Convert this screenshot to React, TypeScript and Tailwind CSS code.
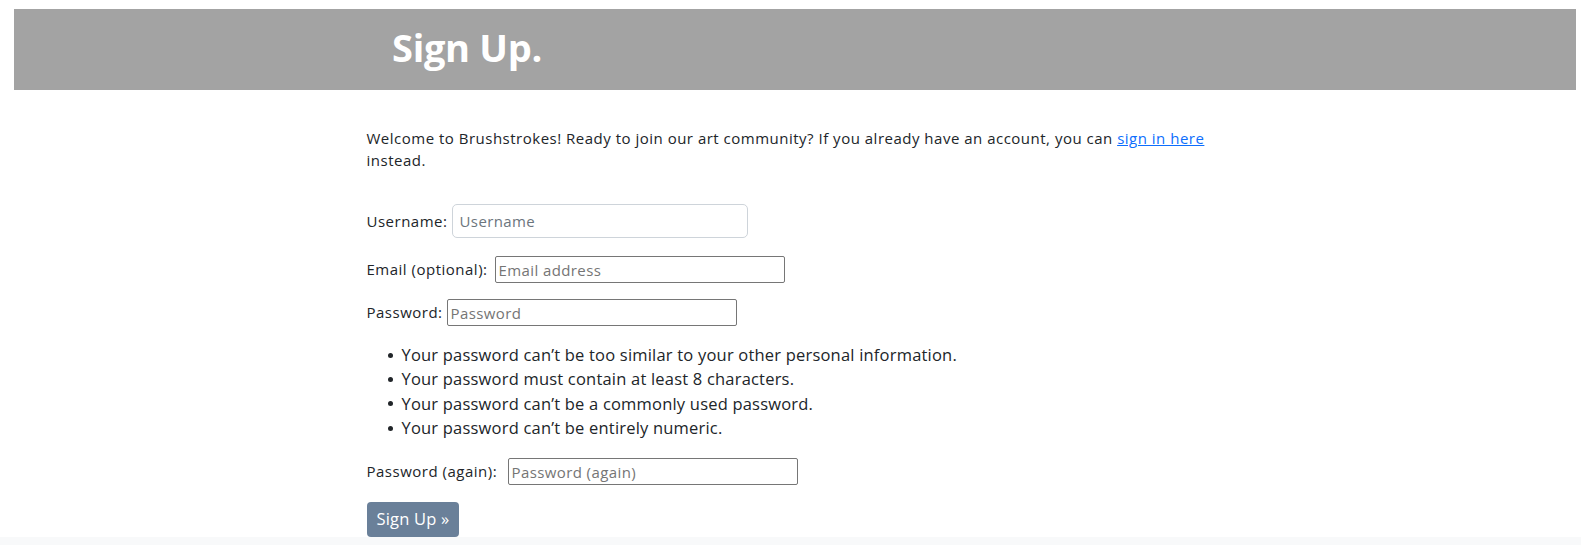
export default function App() {
  return (
    <div className="min-h-[545px] flex flex-col bg-white font-['Open_Sans',sans-serif] text-[#212529] tracking-[0.5px]">
      <div className="pt-[9px]">
        <header className="ml-[14px] mr-[5px] h-[81px] pb-[5px] bg-[#a3a3a3] flex items-center">
          <h1 className="pl-[378px] text-[38px] font-bold text-white leading-none tracking-[-0.3px]">
            Sign Up.
          </h1>
        </header>
      </div>

      <main className="w-[850px] mx-auto flex-1 pl-[1px]">
        <p className="mt-[37px] text-[15px] leading-[22px]">
          Welcome to Brushstrokes! Ready to join our art community? If you already have an account, you can{" "}
          <a href="#" className="text-[#0d6efd] underline">
            sign in here
          </a>{" "}
          instead.
        </p>

        <form className="mt-[33px] text-[15px]">
          <div className="flex items-center h-[34px]">
            <label htmlFor="username" className="w-[85px] shrink-0 whitespace-nowrap">Username:</label>
            <input
              id="username"
              placeholder="Username"
              className="w-[296px] h-[34px] px-[7px] border border-[#ced4da] rounded-[5px] text-[15px] tracking-[0.4px] placeholder:text-[#6c757d] outline-none"
            />
          </div>

          <div className="flex items-center h-[27px] mt-[18px]">
            <label htmlFor="email" className="w-[128px] shrink-0 whitespace-nowrap">Email (optional):</label>
            <input
              id="email"
              placeholder="Email address"
              className="w-[290px] h-[27px] px-[3px] border border-[#767676] rounded-[2px] text-[15px] tracking-[0.4px] placeholder:text-[#757575] outline-none"
            />
          </div>

          <div className="flex items-center h-[27px] mt-[16px]">
            <label htmlFor="password1" className="w-[80px] shrink-0 whitespace-nowrap">Password:</label>
            <input
              id="password1"
              type="password"
              placeholder="Password"
              className="w-[290px] h-[27px] px-[3px] border border-[#767676] rounded-[2px] text-[15px] tracking-[0.4px] placeholder:text-[#757575] outline-none"
            />
          </div>

          <ul className="mt-[17px] pl-[32px] text-[16.5px] leading-[24.3px] tracking-[0.2px]">
            {[
              "Your password can’t be too similar to your other personal information.",
              "Your password must contain at least 8 characters.",
              "Your password can’t be a commonly used password.",
              "Your password can’t be entirely numeric.",
            ].map((t) => (
              <li key={t} className="flex items-center">
                <span className="w-[5px] h-[5px] rounded-full bg-[#212529] -ml-[11px] mr-[9px] shrink-0" />
                {t}
              </li>
            ))}
          </ul>

          <div className="flex items-center h-[27px] mt-[18px]">
            <label htmlFor="password2" className="w-[141px] shrink-0 whitespace-nowrap">Password (again):</label>
            <input
              id="password2"
              type="password"
              placeholder="Password (again)"
              className="w-[290px] h-[27px] px-[3px] border border-[#767676] rounded-[2px] text-[15px] tracking-[0.4px] placeholder:text-[#757575] outline-none"
            />
          </div>

          <button
            type="submit"
            className="mt-[17px] h-[35px] px-[10px] bg-[#6a8099] text-white text-[16.5px] tracking-[0.2px] rounded-[4px]"
          >
            Sign Up »
          </button>
        </form>
      </main>

      <footer className="h-[10px] bg-[#f8f9fa]" />
    </div>
  );
}
